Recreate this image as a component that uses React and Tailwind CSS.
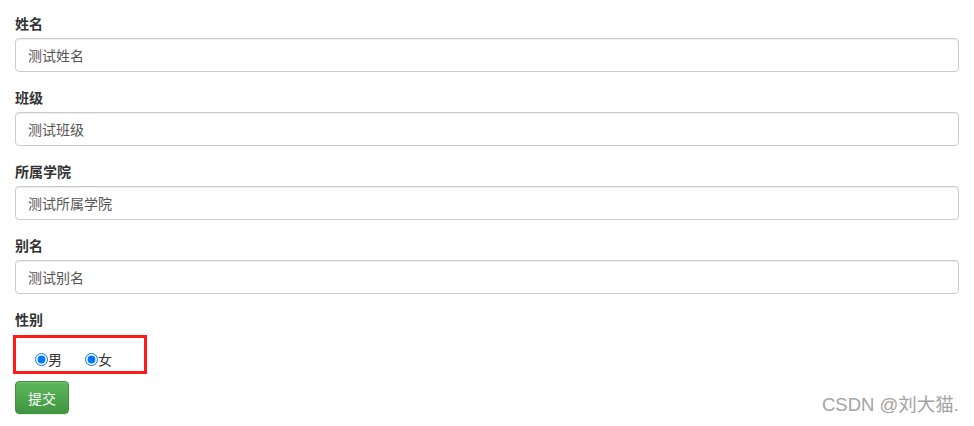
const fields = [
    { label: "姓名", value: "测试姓名" },
    { label: "班级", value: "测试班级" },
    { label: "所属学院", value: "测试所属学院" },
    { label: "别名", value: "测试别名" },
];

export default function App() {
    return (
        <div
            className="relative min-h-[426px] bg-white px-[15px] pt-[13px] text-[14px] text-[#333]"
            style={{ fontFamily: '"Microsoft YaHei", "Noto Sans CJK SC", "Liberation Sans", sans-serif' }}
        >
            <form>
                {fields.map((f) => (
                    <div key={f.label} className="mb-[15px]">
                        <label className="mb-[5px] block h-[20px] font-bold leading-[20px]">{f.label}</label>
                        <input
                            type="text"
                            defaultValue={f.value}
                            className="block h-[34px] w-full rounded-[4px] border border-[#ccc] bg-white px-[12px] text-[14px] leading-[20px] text-[#555] shadow-[inset_0_1px_1px_rgba(0,0,0,0.075)] outline-none"
                        />
                    </div>
                ))}

                <div>
                    <label className="block h-[20px] font-bold leading-[20px]">性别</label>
                    <div className="ml-[-2px] mt-[6px] flex h-[39px] w-[134px] items-end border-[3px] border-[#ff1a1a] pb-[2px] pl-[19px]">
                        <label className="flex items-center leading-[20px]">
                            <input type="radio" name="male" defaultChecked className="m-0 h-[13px] w-[13px] accent-[#0075ff]" />
                            <span>男</span>
                        </label>
                        <label className="ml-[23px] flex items-center leading-[20px]">
                            <input type="radio" name="female" defaultChecked className="m-0 h-[13px] w-[13px] accent-[#0075ff]" />
                            <span>女</span>
                        </label>
                    </div>
                </div>

                <button
                    type="button"
                    className="mt-[7px] block h-[33px] rounded-[4px] border border-[#3e8f3e] bg-gradient-to-b from-[#5cb85c] to-[#419641] px-[12px] text-[14px] leading-[20px] text-white shadow-[inset_0_1px_0_rgba(255,255,255,0.15),0_1px_1px_rgba(0,0,0,0.075)]"
                >
                    提交
                </button>
            </form>

            <div
                className="absolute left-[822px] top-[394px] text-[18.5px] leading-[22px] text-[#a3a3a3]"
                style={{ fontFamily: '"Liberation Sans", "Noto Sans CJK SC", sans-serif' }}
            >
                CSDN @刘大猫.
            </div>
        </div>
    );
}
